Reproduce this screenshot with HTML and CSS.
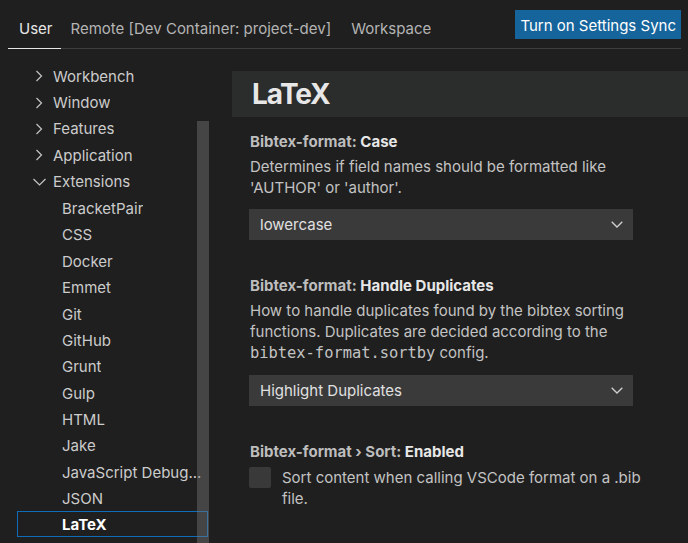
FILE: index.html
```html
<!DOCTYPE html>
<html lang="en">
<head>
<meta charset="utf-8">
<title>Settings</title>
<link rel="stylesheet" href="styles.css">
</head>
<body>
<div class="top">
  <div class="tabs">
    <div class="tab active">User</div>
    <div class="tab">Remote [Dev Container: project-dev]</div>
    <div class="tab">Workspace</div>
  </div>
  <button class="sync">Turn on Settings Sync</button>
</div>
<div class="main">
  <div class="sidebar">
    <div class="tree">
      <div class="row parent"><span class="twistie"><svg width="14" height="12" viewBox="0 0 14 12"><path d="M3.5 1 L8.5 6 L3.5 11" /></svg></span><span class="label">Workbench</span></div>
      <div class="row parent"><span class="twistie"><svg width="14" height="12" viewBox="0 0 14 12"><path d="M3.5 1 L8.5 6 L3.5 11" /></svg></span><span class="label">Window</span></div>
      <div class="row parent"><span class="twistie"><svg width="14" height="12" viewBox="0 0 14 12"><path d="M3.5 1 L8.5 6 L3.5 11" /></svg></span><span class="label">Features</span></div>
      <div class="row parent"><span class="twistie"><svg width="14" height="12" viewBox="0 0 14 12"><path d="M3.5 1 L8.5 6 L3.5 11" /></svg></span><span class="label">Application</span></div>
      <div class="row parent"><span class="twistie"><svg width="14" height="12" viewBox="0 0 14 12"><path d="M0.5 3 L6.5 9 L12.5 3" /></svg></span><span class="label">Extensions</span></div>
      <div class="row child"><span class="label">BracketPair</span></div>
      <div class="row child"><span class="label">CSS</span></div>
      <div class="row child"><span class="label">Docker</span></div>
      <div class="row child"><span class="label">Emmet</span></div>
      <div class="row child"><span class="label">Git</span></div>
      <div class="row child"><span class="label">GitHub</span></div>
      <div class="row child"><span class="label">Grunt</span></div>
      <div class="row child"><span class="label">Gulp</span></div>
      <div class="row child"><span class="label">HTML</span></div>
      <div class="row child"><span class="label">Jake</span></div>
      <div class="row child"><span class="label">JavaScript Debug...</span></div>
      <div class="row child"><span class="label">JSON</span></div>
      <div class="row child selected"><span class="label">LaTeX</span></div>
    </div>
    <div class="scrollbar"></div>
  </div>
  <div class="content">
    <div class="header"><h1>LaTeX</h1></div>
    <div class="setting">
      <div class="title"><span class="cat">Bibtex-format: </span>Case</div>
      <div class="desc">Determines if field names should be formatted like 'AUTHOR' or 'author'.</div>
      <div class="select"><span>lowercase</span><svg width="12" height="7" viewBox="0 0 12 7"><path d="M0.7 0.7 L6 6 L11.3 0.7" /></svg></div>
    </div>
    <div class="setting">
      <div class="title"><span class="cat">Bibtex-format: </span>Handle Duplicates</div>
      <div class="desc">How to handle duplicates found by the bibtex sorting functions. Duplicates are decided according to the <code>bibtex-format.sortby</code> config.</div>
      <div class="select"><span>Highlight Duplicates</span><svg width="12" height="7" viewBox="0 0 12 7"><path d="M0.7 0.7 L6 6 L11.3 0.7" /></svg></div>
    </div>
    <div class="setting">
      <div class="title"><span class="cat">Bibtex-format › Sort: </span>Enabled</div>
      <div class="check-row"><span class="checkbox"></span><span class="check-text">Sort content when calling VSCode format on a .bib file.</span></div>
    </div>
  </div>
</div>
</body>
</html>
```
FILE: styles.css
```css
html, body {
  margin: 0;
  padding: 0;
  background: #1f1f1f;
  height: 100%;
  overflow: hidden;
}
body {
  font-family: Inter, "Noto Sans", sans-serif;
  font-size: 15px;
  color: #cccccc;
}
.top {
  display: flex;
  justify-content: space-between;
  margin: 0 7px 0 8px;
  height: 49px;
  border-bottom: 1px solid #3e3e3e;
  box-sizing: border-box;
}
.tabs {
  display: flex;
  align-items: flex-end;
}
.tab {
  padding: 0 11px 0 9px;
  height: 40px;
  line-height: 42px;
  color: #b4b4b4;
  box-sizing: border-box;
}
.tab.active {
  color: #e7e7e7;
  padding: 0 9px 0 11px;
  border-bottom: 1px solid #e7e7e7;
  margin-bottom: -1px;
  height: 41px;
}
.sync {
  margin-top: 10px;
  align-self: flex-start;
  height: 29px;
  padding: 2px 5px 0;
  border: none;
  background: #15649b;
  color: #ffffff;
  font-family: inherit;
  font-size: 15px;
}
.main {
  display: flex;
}
.sidebar {
  position: relative;
  width: 232px;
  flex: none;
  height: 494px;
}
.tree {
  margin-left: 17px;
  width: 191px;
  padding-top: 14px;
}
.row {
  height: 26.35px;
  display: flex;
  align-items: center;
  border: 1px solid transparent;
  box-sizing: border-box;
  white-space: nowrap;
  overflow: hidden;
}
.row.parent {
  padding-left: 15px;
}
.row.child {
  padding-left: 44px;
  padding-top: 1.5px;
}
.label {
  overflow: hidden;
}
.twistie {
  width: 20px;
  display: flex;
  align-items: center;
}
.twistie svg path {
  fill: none;
  stroke: #c5c5c5;
  stroke-width: 1.2;
}
.row.selected {
  border-color: #0f6cb8;
  color: #ffffff;
  font-weight: 700;
}
.scrollbar {
  position: absolute;
  left: 197px;
  top: 72px;
  width: 12px;
  bottom: 0;
  background: rgba(121, 121, 121, 0.42);
}
.content {
  flex: 1;
  min-width: 0;
}
.header {
  margin-top: 22px;
  height: 46px;
  background: #2b2c2c;
  padding-left: 20px;
  display: flex;
  align-items: center;
}
.header h1 {
  margin: 0;
  font-size: 28px;
  font-weight: 700;
  letter-spacing: -1.1px;
  color: #e7e7e7;
  line-height: 46px;
}
.setting {
  padding: 14px 0 21px 18px;
}
.setting + .setting {
  padding-top: 14px;
}
.title {
  line-height: 21px;
  font-weight: 700;
  color: #e7e7e7;
  margin-bottom: 4px;
}
.title .cat {
  color: #bdbdbd;
}
.desc {
  line-height: 21px;
  color: #c3c3c3;
  margin-bottom: 11px;
  padding-right: 40px;
}
code {
  font-family: "DejaVu Sans Mono", monospace;
  font-size: 15.4px;
}
.select {
  width: 384px;
  height: 31px;
  margin-left: -1px;
  background: #3a3a3a;
  display: flex;
  align-items: center;
  justify-content: space-between;
  padding: 0 10px 0 11px;
  box-sizing: border-box;
  color: #e0e0e0;
}
.select svg path {
  fill: none;
  stroke: #d0d0d0;
  stroke-width: 1.3;
}
.check-row {
  display: flex;
  align-items: flex-start;
  margin-top: 5px;
  margin-left: -1px;
}
.checkbox {
  width: 22px;
  height: 21px;
  background: #393939;
  flex: none;
  margin-right: 11px;
  border-radius: 2px;
}
.check-text {
  line-height: 21px;
  color: #c3c3c3;
  width: 360px;
}
```
